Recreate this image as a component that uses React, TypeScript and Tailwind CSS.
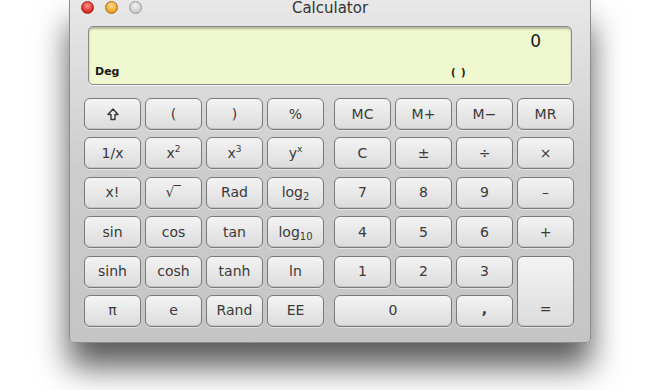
import React from "react";

const sup = (base: string, s: string) => (
  <span>
    {base}
    <sup className="text-[9px] -top-[6px]">{s}</sup>
  </span>
);

const sub = (base: string, s: string) => (
  <span>
    {base}
    <sub className="text-[10px] -bottom-[3px]">{s}</sub>
  </span>
);

const ShiftIcon = () => (
  <svg width="12" height="13" viewBox="0 0 12 13">
    <path
      d="M6 1 L11 6.5 L8 6.5 L8 11.5 L4 11.5 L4 6.5 L1 6.5 Z"
      fill="none"
      stroke="#3a3a3a"
      strokeWidth="1.4"
      strokeLinejoin="round"
    />
  </svg>
);

const sci: React.ReactNode[] = [
  <ShiftIcon />, "(", ")", "%",
  "1/x", sup("x", "2"), sup("x", "3"), sup("y", "x"),
  "x!", <span>√<span className="inline-block w-[7px] border-t border-[#3a3a3a] align-top mt-[3px]" /></span>, "Rad", sub("log", "2"),
  "sin", "cos", "tan", sub("log", "10"),
  "sinh", "cosh", "tanh", "ln",
  "π", "e", "Rand", "EE",
];

const Btn: React.FC<{ children: React.ReactNode; className?: string }> = ({
  children,
  className = "",
}) => (
  <div
    className={`flex items-center justify-center rounded-[6px] border border-[#7a7a7a] bg-gradient-to-b from-[#f4f4f4] to-[#dcdcdc] text-[14px] text-[#3a3a3a] shadow-[inset_0_-1px_0_#c4c4c4,0_1px_0_rgba(255,255,255,0.5)] ${className}`}
  >
    {children}
  </div>
);

const App: React.FC = () => {
  return (
    <div
      className="w-[660px] h-[390px] bg-white overflow-hidden pl-[69px]"
      style={{ fontFamily: '"DejaVu Sans", "Liberation Sans", sans-serif' }}
    >
      <div className="w-[522px] h-[343px] rounded-b-[5px] border border-t-0 border-[#8c8c8c] bg-gradient-to-b from-[#e8e8e8] via-[#cdcdcd] to-[#c5c5c5] shadow-[0_24px_32px_rgba(0,0,0,0.65)] flex flex-col">
        {/* title bar */}
        <div className="relative h-[22px] flex items-center justify-center">
          <div className="absolute left-[11px] top-[1px] flex gap-[11px]">
            <div className="w-[13px] h-[13px] rounded-full border border-[#a02a2a] bg-[radial-gradient(circle_at_50%_35%,#ff9b90,#e0302a_60%,#b41d1d)]" />
            <div className="w-[13px] h-[13px] rounded-full border border-[#a9731a] bg-[radial-gradient(circle_at_50%_35%,#ffe0a0,#f0a528_60%,#c98316)]" />
            <div className="w-[13px] h-[13px] rounded-full border border-[#9a9a9a] bg-[radial-gradient(circle_at_50%_35%,#f5f5f5,#d0d0d0_60%,#b2b2b2)]" />
          </div>
          <span className="text-[15px] text-[#333] -mt-[6px]">Calculator</span>
        </div>

        {/* display */}
        <div className="mx-[18px] mt-[4px] h-[59px] rounded-[5px] border border-[#8a8a8a] bg-[#eff8cf] shadow-[inset_0_2px_2px_rgba(0,0,0,0.25),0_1px_0_rgba(255,255,255,0.7)] relative">
          <div className="absolute right-[30px] top-[2px] text-[17px] text-[#1a1a1a]">0</div>
          <div className="absolute left-[6px] bottom-[4px] text-[11px] font-bold text-[#1a1a1a]">Deg</div>
          <div className="absolute left-[362px] bottom-[4px] text-[10px] font-bold text-[#1a1a1a] tracking-[1px]">( )</div>
        </div>

        {/* keys */}
        <div className="mt-[13px] mx-[14px] flex gap-[10px]">
          <div className="grid grid-cols-[57px_57px_57px_57px] grid-rows-[repeat(6,32px)] gap-x-[4px] gap-y-[7.4px]">
            {sci.map((k, i) => (
              <Btn key={i}>{k}</Btn>
            ))}
          </div>
          <div className="grid grid-cols-[57px_57px_57px_57px] grid-rows-[repeat(6,32px)] gap-x-[4px] gap-y-[7.4px]">
            <Btn>MC</Btn>
            <Btn>M+</Btn>
            <Btn>M−</Btn>
            <Btn>MR</Btn>
            <Btn>C</Btn>
            <Btn>±</Btn>
            <Btn>÷</Btn>
            <Btn>×</Btn>
            <Btn>7</Btn>
            <Btn>8</Btn>
            <Btn>9</Btn>
            <Btn>–</Btn>
            <Btn>4</Btn>
            <Btn>5</Btn>
            <Btn>6</Btn>
            <Btn>+</Btn>
            <Btn>1</Btn>
            <Btn>2</Btn>
            <Btn>3</Btn>
            <Btn className="row-span-2 items-end pb-[6px]">=</Btn>
            <Btn className="col-span-2">0</Btn>
            <Btn className="items-end pb-[6px] font-bold">,</Btn>
          </div>
        </div>
      </div>
    </div>
  );
};

export default App;
